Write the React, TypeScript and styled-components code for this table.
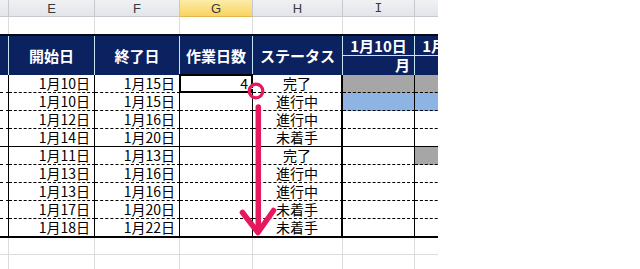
import React from 'react';
import styled, { createGlobalStyle } from 'styled-components';

const GlobalStyle = createGlobalStyle`
  html, body {
    margin: 0;
    padding: 0;
    background: #fff;
  }
  body {
    font-family: "Noto Sans CJK JP", "Noto Sans", sans-serif;
  }
`;

// partial D, E, F, G, H, I, J (J is cut off by the sheet edge)
const COLUMNS = '9px 86px 85px 73px 90px 72px 72px';

const Page = styled.div`
  position: relative;
  width: 640px;
  height: 269px;
  overflow: hidden;
  background: #fff;
`;

const Sheet = styled.div`
  width: 438px;
  overflow: hidden;
`;

const Row = styled.div<{ $height: number }>`
  display: grid;
  grid-template-columns: ${COLUMNS};
  height: ${p => p.$height}px;
`;

const HeadRow = styled(Row)`
  border-top: 2px solid #050a1a;
  background: #0c2160;
`;

const ColHead = styled.div<{ $active?: boolean }>`
  box-sizing: border-box;
  display: flex;
  align-items: center;
  justify-content: center;
  border-right: 1px solid #c6cacf;
  border-bottom: 1px solid ${p => (p.$active ? '#e0b54c' : '#c6cacf')};
  background: ${p =>
    p.$active ? 'linear-gradient(#fdeca8, #f7d461)' : 'linear-gradient(#f0f1f3, #e2e5e9)'};
  color: #3a3a3a;
  font: 13px "Liberation Sans", sans-serif;
`;

const SerifLetter = styled.span`
  font-family: "Liberation Mono", monospace;
  font-size: 13px;
`;

const BlankCell = styled.div<{ $bottom?: boolean }>`
  box-sizing: border-box;
  border-right: 1px solid #dcdcdc;
  border-bottom: ${p => (p.$bottom ? '1px solid #dcdcdc' : 'none')};
`;

const HeadCell = styled.div`
  box-sizing: border-box;
  display: flex;
  align-items: center;
  justify-content: center;
  border-right: 1px solid #c4e6f4;
  color: #fff;
  font-size: 15px;
  font-weight: 700;
  white-space: nowrap;
  overflow: hidden;
`;

const DateHead = styled.div`
  box-sizing: border-box;
  display: flex;
  flex-direction: column;
  border-right: 1px solid #c4e6f4;
  color: #fff;
  font-size: 15px;
  font-weight: 700;
  white-space: nowrap;
  overflow: hidden;
`;

const DateTop = styled.div`
  box-sizing: border-box;
  height: 20px;
  line-height: 19px;
  text-align: center;
  border-bottom: 1px solid #c4e6f4;
`;

const DateBottom = styled.div`
  flex: 1;
  line-height: 17px;
  text-align: right;
  padding-right: 4px;
`;

type Line = 'dotted' | 'solid' | 'thick';

const DataCell = styled.div<{
  $bottom: Line;
  $thickRight?: boolean;
  $fill?: string;
  $align?: 'right' | 'center';
}>`
  position: relative;
  box-sizing: border-box;
  padding: 0 4px;
  display: flex;
  align-items: flex-end;
  justify-content: ${p => (p.$align === 'center' ? 'center' : 'flex-end')};
  background: ${p => p.$fill || '#fff'};
  border-right: ${p => (p.$thickRight ? '2px' : '1px')} solid #000;
  border-bottom: ${p =>
    p.$bottom === 'thick' ? '2px solid #000' : p.$bottom === 'solid' ? '1px solid #000' : '1px dashed #000'};
  color: #000;
  font-size: 14px;
  line-height: 17px;
  white-space: nowrap;
`;

const Selection = styled.div`
  position: absolute;
  top: -1px;
  left: -1px;
  right: -1px;
  bottom: -1px;
  border: 2px solid #000;
  box-shadow: inset 0 0 0 1px #fff;
`;

const FillHandle = styled.div`
  position: absolute;
  right: -4px;
  bottom: -4px;
  width: 5px;
  height: 5px;
  background: #000;
  border: 1px solid #fff;
`;

const Overlay = styled.svg`
  position: absolute;
  left: 0;
  top: 0;
  pointer-events: none;
`;

interface Task {
  start: string;
  end: string;
  days?: string;
  status: string;
  d1?: string;
  d2?: string;
}

const GRAY = '#a6a6a6';
const BLUE = '#8db4e2';

const tasks: Task[] = [
  { start: '1月10日', end: '1月15日', days: '4', status: '完了', d1: GRAY, d2: GRAY },
  { start: '1月10日', end: '1月15日', status: '進行中', d1: BLUE, d2: BLUE },
  { start: '1月12日', end: '1月16日', status: '進行中' },
  { start: '1月14日', end: '1月20日', status: '未着手' },
  { start: '1月11日', end: '1月13日', status: '完了', d2: GRAY },
  { start: '1月13日', end: '1月16日', status: '進行中' },
  { start: '1月13日', end: '1月16日', status: '進行中' },
  { start: '1月17日', end: '1月20日', status: '未着手' },
  { start: '1月18日', end: '1月22日', status: '未着手' },
];

const PINK = '#e6195f';

export default function App() {
  const lineFor = (i: number): Line => (i === tasks.length - 1 ? 'thick' : i === 3 ? 'solid' : 'dotted');

  return (
    <>
      <GlobalStyle />
      <Page>
        <Sheet>
          <Row $height={17}>
            <ColHead />
            <ColHead>E</ColHead>
            <ColHead>F</ColHead>
            <ColHead $active>G</ColHead>
            <ColHead>H</ColHead>
            <ColHead>
              <SerifLetter>I</SerifLetter>
            </ColHead>
            <ColHead>J</ColHead>
          </Row>

          <Row $height={17}>
            {Array.from({ length: 7 }).map((_, i) => (
              <BlankCell key={i} />
            ))}
          </Row>

          <HeadRow $height={39}>
            <HeadCell />
            <HeadCell>開始日</HeadCell>
            <HeadCell>終了日</HeadCell>
            <HeadCell>作業日数</HeadCell>
            <HeadCell>ステータス</HeadCell>
            <DateHead>
              <DateTop>1月10日</DateTop>
              <DateBottom>月</DateBottom>
            </DateHead>
            <DateHead>
              <DateTop>1月11日</DateTop>
              <DateBottom>火</DateBottom>
            </DateHead>
          </HeadRow>

          {tasks.map((t, i) => {
            const line = lineFor(i);
            return (
              <Row key={i} $height={line === 'thick' ? 19 : 18}>
                <DataCell $bottom={line} />
                <DataCell $bottom={line}>{t.start}</DataCell>
                <DataCell $bottom={line}>{t.end}</DataCell>
                <DataCell $bottom={line}>
                  {t.days}
                  {i === 0 && (
                    <Selection>
                      <FillHandle />
                    </Selection>
                  )}
                </DataCell>
                <DataCell $bottom={line} $thickRight $align="center">
                  {t.status}
                </DataCell>
                <DataCell $bottom={line} $fill={t.d1} />
                <DataCell $bottom={line} $fill={t.d2} />
              </Row>
            );
          })}

          <Row $height={17}>
            {Array.from({ length: 7 }).map((_, i) => (
              <BlankCell key={i} $bottom />
            ))}
          </Row>
          <Row $height={18}>
            {Array.from({ length: 7 }).map((_, i) => (
              <BlankCell key={i} />
            ))}
          </Row>
        </Sheet>

        <Overlay width={640} height={269} viewBox="0 0 640 269">
          <circle cx={256} cy={91} r={6.8} fill="none" stroke={PINK} strokeWidth={3.2} />
          <line x1={258.3} y1={107} x2={258.3} y2={230} stroke={PINK} strokeWidth={5.5} strokeLinecap="round" />
          <polyline
            points="242.5,212.5 258,232.5 273.5,210.5"
            fill="none"
            stroke={PINK}
            strokeWidth={5.5}
            strokeLinecap="round"
            strokeLinejoin="round"
          />
        </Overlay>
      </Page>
    </>
  );
}
